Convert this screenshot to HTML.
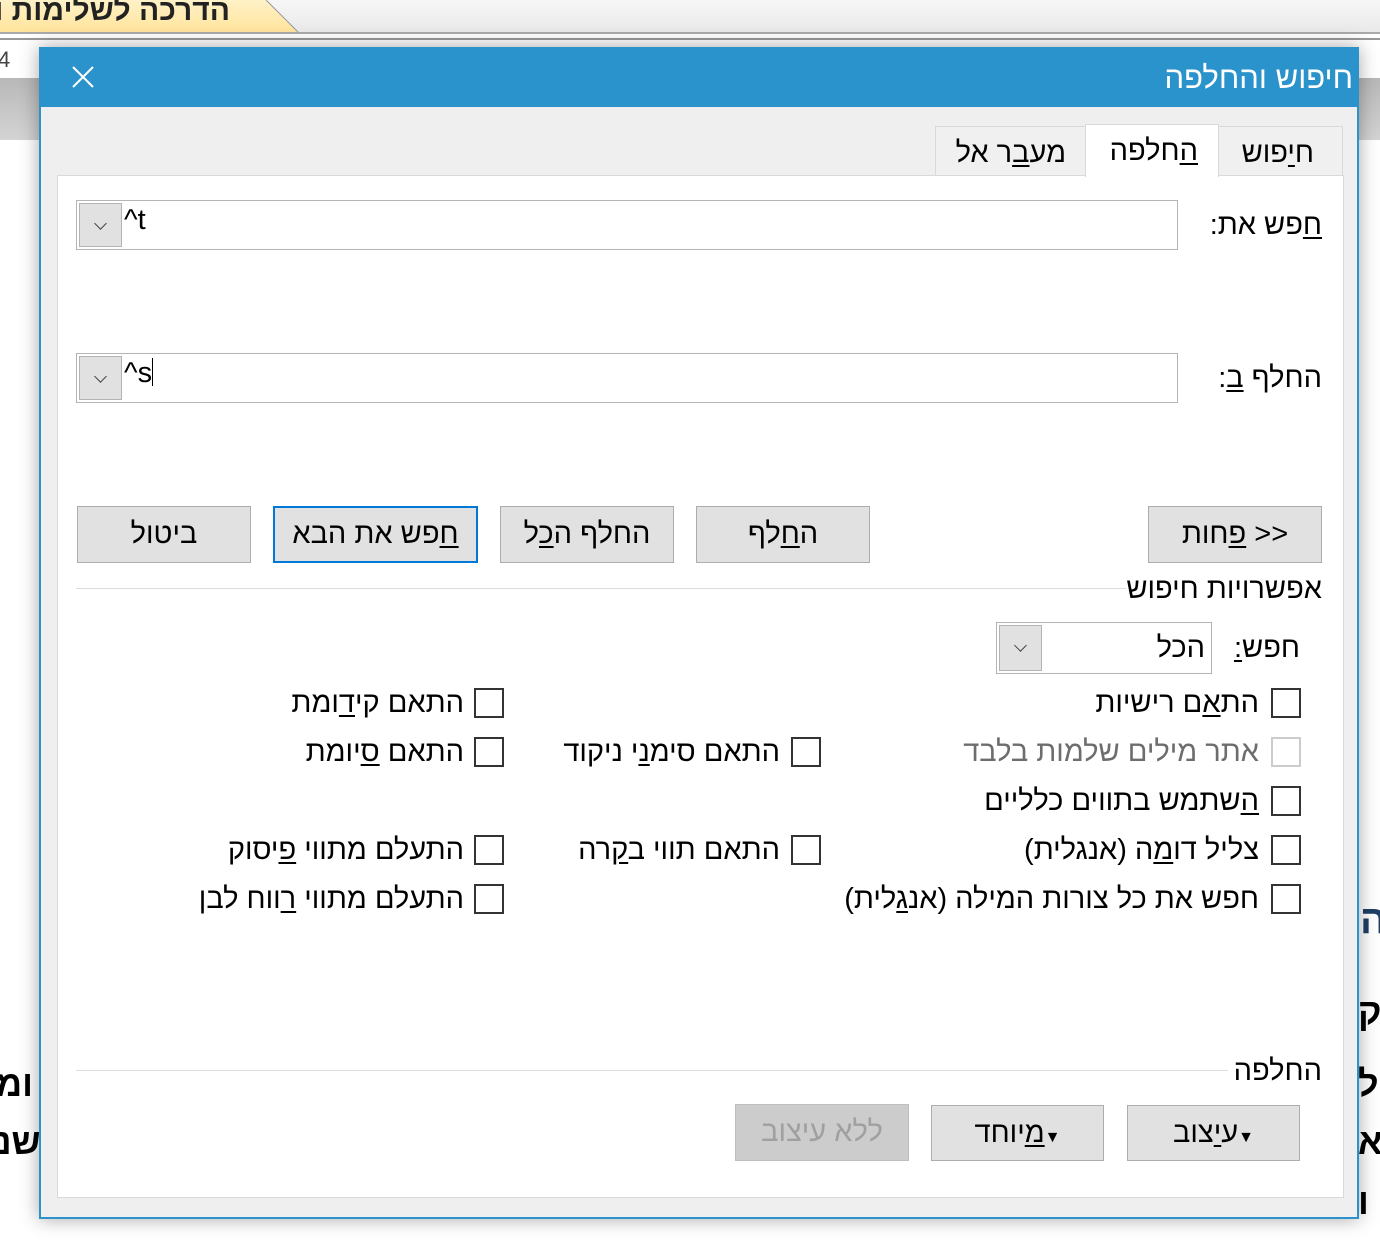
<!DOCTYPE html>
<html><head><meta charset="utf-8"><style>
*{margin:0;padding:0;box-sizing:border-box}
body{width:1380px;height:1248px;overflow:hidden;background:#fff;font-family:"Liberation Sans","DejaVu Sans",sans-serif;position:relative;color:#000}
.a{position:absolute}
.t{position:absolute;font-size:29px;line-height:32px;white-space:nowrap;direction:rtl}
u{text-decoration:underline;text-underline-offset:3px}
.btn{position:absolute;background:#e1e1e1;border:1px solid #adadad;font-size:29px;display:flex;align-items:center;justify-content:center;direction:rtl;white-space:nowrap}
.cb{position:absolute;width:30px;height:30px;border:2px solid #333;background:#fff}
.field{position:absolute;border:1px solid #b4b4b4;background:#fff}
.dd{position:absolute;left:2px;top:2px;bottom:2px;width:43px;background:#e1e1e1;border:1px solid #b4b4b4}
.dd:after{content:"";position:absolute;left:16px;top:15px;width:8px;height:8px;border-right:1px solid #444;border-bottom:1px solid #444;transform:rotate(45deg)}
</style></head><body>
<!-- background app -->
<div class="a" style="left:0;top:0;width:1380px;height:33px;background:linear-gradient(#f7f7f7,#e9e9e9)"></div>
<svg class="a" style="left:0;top:0" width="300" height="33"><defs><linearGradient id="g" x1="0" y1="0" x2="0" y2="1"><stop offset="0" stop-color="#fff2c8"/><stop offset="1" stop-color="#ffe39a"/></linearGradient></defs><polygon points="0,0 266,0 298,33 0,33" fill="url(#g)"/><polyline points="266,0 298,32" stroke="#999" fill="none"/></svg>
<div class="t" style="right:1150px;top:-5px;font-weight:bold;font-size:30px;color:#222">הדרכה לשלימות ו <span style="font-size:24px">*</span> <span style="font-size:14px;color:#888">×</span></div>
<div class="a" style="left:0;top:32px;width:1380px;height:2px;background:#aaa"></div>
<div class="a" style="left:0;top:38px;width:1380px;height:2px;background:#999"></div>
<div class="a" style="left:0;top:40px;width:1380px;height:38px;background:#fff"></div>
<div class="t" style="left:-2px;top:44px;font-size:22px;color:#444">4</div>
<div class="a" style="left:0;top:78px;width:1380px;height:62px;background:linear-gradient(#b8b8b8,#d4d4d4)"></div>
<div class="t" style="left:-4px;top:1068px;font-size:36px;font-weight:bold">ומ</div>
<div class="t" style="left:-4px;top:1126px;font-size:36px;font-weight:bold">שנ</div>
<div class="t" style="left:1360px;top:904px;font-size:40px;font-weight:bold;color:#1f3f66">ה</div>
<div class="t" style="left:1358px;top:996px;font-size:36px;font-weight:bold">ק</div>
<div class="t" style="left:1358px;top:1068px;font-size:36px;font-weight:bold">ל</div>
<div class="t" style="left:1358px;top:1126px;font-size:36px;font-weight:bold">א</div>
<div class="t" style="left:1358px;top:1186px;font-size:36px;font-weight:bold">ו</div>
<!-- dialog -->
<div class="a" style="left:39px;top:47px;width:1320px;height:1172px;background:#efefef;border:2px solid #2b93cb;box-shadow:0 0 18px rgba(0,0,0,.35)"></div>
<div class="a" style="left:39px;top:47px;width:1320px;height:60px;background:#2b93cb"></div>
<div class="t" style="right:27px;top:60px;color:#fff;font-size:31px;line-height:36px">חיפוש והחלפה</div>
<svg class="a" style="left:72px;top:66px" width="22" height="22"><path d="M1 1L21 21M21 1L1 21" stroke="#fff" stroke-width="2"/></svg>
<!-- tabs -->
<div class="a" style="left:935px;top:126px;width:408px;height:50px;background:#f0f0f0;border:1px solid #d9d9d9"></div>
<div class="a" style="left:1085px;top:124px;width:134px;height:53px;background:#fff;border:1px solid #d9d9d9;border-bottom:none;z-index:2"></div>
<div class="t" style="right:66px;top:137px">ח<u>י</u>פוש</div>
<div class="t" style="right:182px;top:135px;z-index:3"><u>ה</u>חלפה</div>
<div class="t" style="right:314px;top:137px">מע<u>ב</u>ר אל</div>
<div class="a" style="left:57px;top:175px;width:1287px;height:1023px;background:#fff;border:1px solid #d9d9d9"></div>
<!-- fields -->
<div class="t" style="right:58px;top:209px"><u>ח</u>פש את:</div>
<div class="field" style="left:76px;top:200px;width:1102px;height:50px"><div class="dd"></div></div>
<div class="t" style="left:124px;top:204px;direction:ltr">^t</div>
<div class="t" style="right:58px;top:362px">החלף <u>ב</u>:</div>
<div class="field" style="left:76px;top:353px;width:1102px;height:50px"><div class="dd"></div></div>
<div class="t" style="left:124px;top:357px;direction:ltr">^s<span style="display:inline-block;width:1px;height:28px;background:#000;vertical-align:-4px"></span></div>
<!-- buttons -->
<div class="btn" style="left:77px;top:506px;width:174px;height:57px">ביטול</div>
<div class="btn" style="left:273px;top:506px;width:205px;height:57px;border:2px solid #0078d7"><span><u>ח</u>פש את הבא</span></div>
<div class="btn" style="left:500px;top:506px;width:174px;height:57px"><span>החלף ה<u>כ</u>ל</span></div>
<div class="btn" style="left:696px;top:506px;width:174px;height:57px"><span>ה<u>ח</u>לף</span></div>
<div class="btn" style="left:1148px;top:506px;width:174px;height:57px"><span>&lt;&lt; <u>פ</u>חות</span></div>
<!-- options -->
<div class="a" style="left:76px;top:588px;width:1050px;height:1px;background:#dcdcdc"></div>
<div class="t" style="right:58px;top:573px">אפשרויות חיפוש</div>
<div class="t" style="right:80px;top:632px">חפש<u>:</u></div>
<div class="field" style="left:996px;top:622px;width:216px;height:52px"><div class="dd"></div></div>
<div class="t" style="right:175px;top:632px">הכל</div>

<div class="cb" style="left:1271px;top:688px"></div><div class="t" style="right:121px;top:687px">הת<u>א</u>ם רישיות</div>
<div class="cb" style="left:1271px;top:737px;border-color:#ccc"></div><div class="t" style="right:121px;top:736px;color:#6d6d6d">אתר מילים שלמות בלבד</div>
<div class="cb" style="left:1271px;top:786px"></div><div class="t" style="right:121px;top:785px"><u>ה</u>שתמש בתווים כלליים</div>
<div class="cb" style="left:1271px;top:835px"></div><div class="t" style="right:121px;top:834px">צליל דו<u>מ</u>ה (אנגלית)</div>
<div class="cb" style="left:1271px;top:884px"></div><div class="t" style="right:121px;top:883px">חפש את כל צורות המילה (אנ<u>ג</u>לית)</div>

<div class="cb" style="left:791px;top:737px"></div><div class="t" style="right:600px;top:736px">התאם סימ<u>נ</u>י ניקוד</div>
<div class="cb" style="left:791px;top:835px"></div><div class="t" style="right:600px;top:834px">התאם תווי ב<u>ק</u>רה</div>

<div class="cb" style="left:474px;top:688px"></div><div class="t" style="right:916px;top:687px">התאם קי<u>ד</u>ומת</div>
<div class="cb" style="left:474px;top:737px"></div><div class="t" style="right:916px;top:736px">התאם <u>ס</u>יומת</div>
<div class="cb" style="left:474px;top:835px"></div><div class="t" style="right:916px;top:834px">התעלם מתווי <u>פ</u>יסוק</div>
<div class="cb" style="left:474px;top:884px"></div><div class="t" style="right:916px;top:883px">התעלם מתווי <u>ר</u>ווח לבן</div>
<!-- replace -->
<div class="a" style="left:76px;top:1070px;width:1152px;height:1px;background:#dcdcdc"></div>
<div class="t" style="right:58px;top:1055px">החלפה</div>
<div class="btn" style="left:1127px;top:1105px;width:173px;height:56px"><span><span style="font-size:16px">▼</span>ע<u>י</u>צוב</span></div>
<div class="btn" style="left:931px;top:1105px;width:173px;height:56px"><span><span style="font-size:16px">▼</span><u>מ</u>יוחד</span></div>
<div class="btn" style="left:735px;top:1104px;width:174px;height:57px;background:#cccccc;border-color:#bfbfbf;color:#a0a0a0">ללא עיצוב</div>
</body></html>
